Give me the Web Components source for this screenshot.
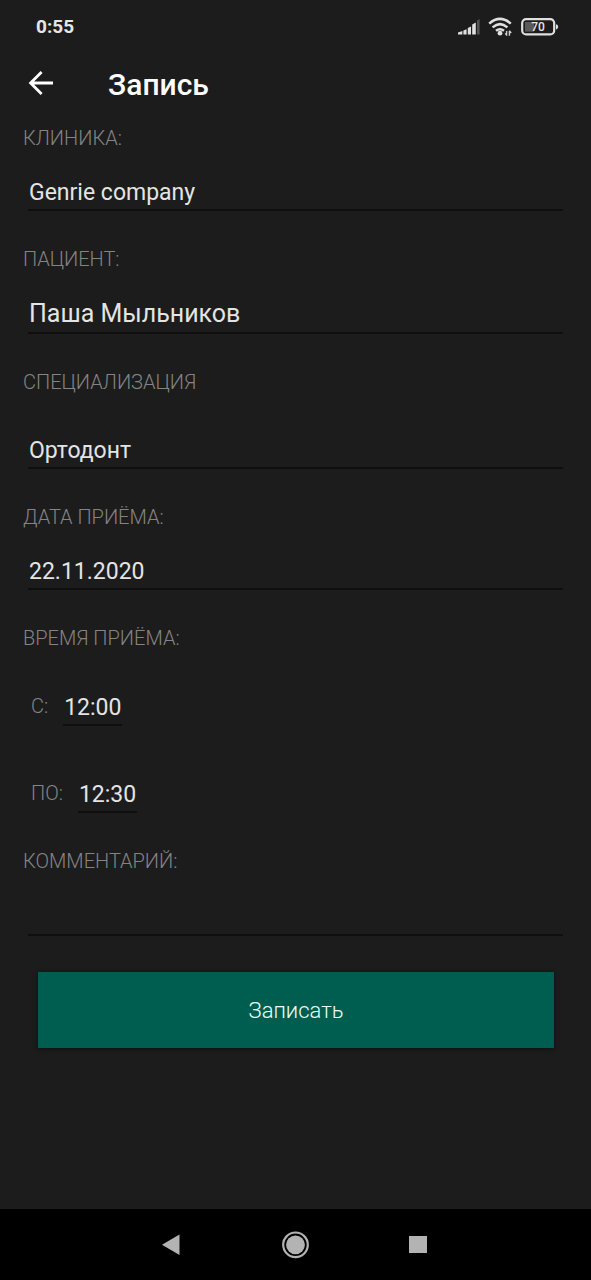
<!DOCTYPE html>
<html lang="ru">
<head>
<meta charset="utf-8">
<meta name="viewport" content="width=device-width, initial-scale=1">
<title>Запись</title>
<style>
  body { margin: 0; background: #1c1c1c; }
</style>
</head>
<body>
<booking-app></booking-app>
<script>
const define = (name, html, setup) => {
  const template = document.createElement('template');
  template.innerHTML = html;
  customElements.define(name, class extends HTMLElement {
    constructor() {
      super();
      this.attachShadow({ mode: 'open' }).append(template.content.cloneNode(true));
    }
    connectedCallback() {
      if (setup) setup(this, this.shadowRoot);
    }
  });
};

define('status-bar', `
  <style>
    :host { display: flex; align-items: center; justify-content: space-between; height: 53px; padding: 0 32px 0 36px; color: #e6e6e6; }
    time { font-size: 19px; font-weight: 700; line-height: 24px; }
    .icons { display: flex; align-items: center; gap: 8px; }
    svg { display: block; }
  </style>
  <time>0:55</time>
  <div class="icons">
    <svg width="22" height="18" viewBox="0 0 22 18" fill="#e0e0e0" role="img" aria-label="Сигнал">
      <path d="M0 16.5V14.6L4.4 13V16.5ZM5.4 12.5L8.6 11.2V16.5H5.4ZM9.8 10L13 8.4V16.5H9.8ZM14.2 6.6L17.8 4.6V16.5H14.2Z"/>
      <path d="M19 2.4L21.6 1V16.5H19Z" fill="#555"/>
    </svg>
    <svg width="25" height="20" viewBox="0 0 25 20" role="img" aria-label="Wi-Fi">
      <g fill="none" stroke="#e0e0e0" stroke-width="2.5">
        <path d="M1.2 6.6Q12 -2.8 22.8 6.6"/>
        <path d="M4.6 10.4Q12 3.8 19.4 10.4"/>
        <path d="M8 13.8Q12 10.6 16 13.8"/>
      </g>
      <circle cx="12" cy="16.2" r="2.4" fill="#e0e0e0"/>
      <path d="M18.6 14V18.4M17.2 16.4L19 18.6M21.4 18.8V13.8M21.4 13.8L23.2 16" fill="none" stroke="#d0d0d0" stroke-width="1.4"/>
    </svg>
    <svg width="38" height="18" viewBox="0 0 38 18" role="img" aria-label="Батарея">
      <rect x="1.2" y="1.2" width="32" height="15.2" rx="4" fill="none" stroke="#e0e0e0" stroke-width="2.2"/>
      <rect x="4" y="4" width="9" height="9.6" fill="#5a5a5a"/>
      <path d="M35 6.2Q37.2 6.4 37.2 8.8T35 11.4Z" fill="#e0e0e0"/>
      <text x="17" y="13" text-anchor="middle" font-size="12" font-weight="500" fill="#e6e6e6">70</text>
    </svg>
  </div>`);

define('app-bar', `
  <style>
    :host { display: flex; align-items: center; gap: 54px; height: 64px; padding: 0 28px; color: #fff; }
    button { padding: 0 0 4px; border: 0; background: none; color: inherit; }
    svg { display: block; }
    h1 { margin: 0; font-size: 30px; font-weight: 500; line-height: 40px; }
  </style>
  <button type="button" aria-label="Назад">
    <svg width="26" height="26" viewBox="0 0 26 26" fill="none" stroke="currentColor" stroke-width="2.8">
      <path d="M25 13H3M13.6 2L2.6 13L13.6 24"/>
    </svg>
  </button>
  <h1><slot></slot></h1>`);

const copyToInput = (host, root) => {
  root.querySelector('label').textContent = host.getAttribute('label');
  root.querySelector('input').value = host.getAttribute('value') || '';
};

define('form-field', `
  <style>
    :host { display: flex; flex-direction: column; gap: var(--field-gap, 20px); }
    label { padding: 0 23px; font-size: 20px; font-weight: 300; line-height: 24px; color: #848484; }
    input { height: 41px; margin: 0 28px; padding: 5px 1px 0; box-sizing: border-box; border: 0; border-bottom: 2px solid #0f0f0f; border-radius: 0; outline: 0; background: none; font: inherit; font-size: 23px; color: #e4e4e4; }
    :host([size="large"]) { --field-gap: 22px; }
    :host([size="large"]) input { padding-top: 2px; font-size: 25px; }
    :host([spacing="medium"]) { --field-gap: 22px; }
    :host([spacing="wide"]) { --field-gap: 34px; }
  </style>
  <label for="value"></label>
  <input id="value" type="text">`, copyToInput);

define('time-field', `
  <style>
    :host { display: flex; align-items: center; gap: 15px; padding-left: 31px; }
    label { font-size: 20px; font-weight: 300; line-height: 24px; color: #848484; }
    input { width: 59px; height: 41px; padding: 5px 1px 0; box-sizing: border-box; border: 0; border-bottom: 2px solid #0f0f0f; border-radius: 0; outline: 0; background: none; font: inherit; font-size: 23px; color: #e4e4e4; }
  </style>
  <label for="value"></label>
  <input id="value" type="text">`, copyToInput);

define('time-range', `
  <style>
    :host { display: block; }
    fieldset { margin: 0; padding: 0; border: 0; min-width: 0; }
    legend { padding: 0 23px; font-size: 20px; font-weight: 300; line-height: 24px; color: #848484; }
    .times { display: flex; flex-direction: column; gap: 46px; padding-top: 35px; }
  </style>
  <fieldset>
    <legend></legend>
    <div class="times"><slot></slot></div>
  </fieldset>`, (host, root) => {
    root.querySelector('legend').textContent = host.getAttribute('label');
  });

define('submit-button', `
  <style>
    :host { display: block; padding: 0 37px 0 38px; }
    button { display: block; width: 100%; height: 76px; padding: 0; border: 0; background: #005e50; box-shadow: 0 1px 4px #0008; font: inherit; font-size: 22px; font-weight: 300; color: #e8fffa; }
  </style>
  <button type="submit"><slot></slot></button>`);

define('nav-bar', `
  <style>
    :host { display: grid; grid-template-columns: repeat(3, 21%); justify-content: center; height: 71px; background: #000; }
    button { display: grid; place-items: center; padding: 0; border: 0; background: none; color: #b3b3b3; }
  </style>
  <button type="button" aria-label="Назад">
    <svg width="28" height="28" viewBox="0 0 28 28" fill="currentColor"><path d="M22.5 3.5V24L5 13.7Z"/></svg>
  </button>
  <button type="button" aria-label="Домой">
    <svg width="28" height="28" viewBox="0 0 28 28"><circle cx="14.5" cy="13.8" r="12.3" fill="none" stroke="currentColor" stroke-width="2.2"/><circle cx="14.5" cy="13.8" r="9.4" fill="currentColor"/></svg>
  </button>
  <button type="button" aria-label="Недавние">
    <svg width="28" height="28" viewBox="0 0 28 28" fill="currentColor"><path d="M3 5H21V22H3Z"/></svg>
  </button>`);

define('booking-app', `
  <style>
    :host { display: flex; flex-direction: column; min-height: 100vh; background: #1c1c1c; font-family: Roboto, "Liberation Sans", sans-serif; }
    main { flex: 1; padding: 9px 0 36px; }
    form { display: flex; flex-direction: column; gap: 36px; }
  </style>
  <status-bar></status-bar>
  <app-bar>Запись</app-bar>
  <main>
    <form>
      <form-field label="КЛИНИКА:" value="Genrie company"></form-field>
      <form-field label="ПАЦИЕНТ:" value="Паша Мыльников" size="large"></form-field>
      <form-field label="СПЕЦИАЛИЗАЦИЯ" value="Ортодонт" spacing="wide"></form-field>
      <form-field label="ДАТА ПРИЁМА:" value="22.11.2020"></form-field>
      <time-range label="ВРЕМЯ ПРИЁМА:">
        <time-field label="С:" value="12:00"></time-field>
        <time-field label="ПО:" value="12:30"></time-field>
      </time-range>
      <form-field label="КОММЕНТАРИЙ:" spacing="medium"></form-field>
      <submit-button>Записать</submit-button>
    </form>
  </main>
  <nav-bar></nav-bar>`);
</script>
</body>
</html>
